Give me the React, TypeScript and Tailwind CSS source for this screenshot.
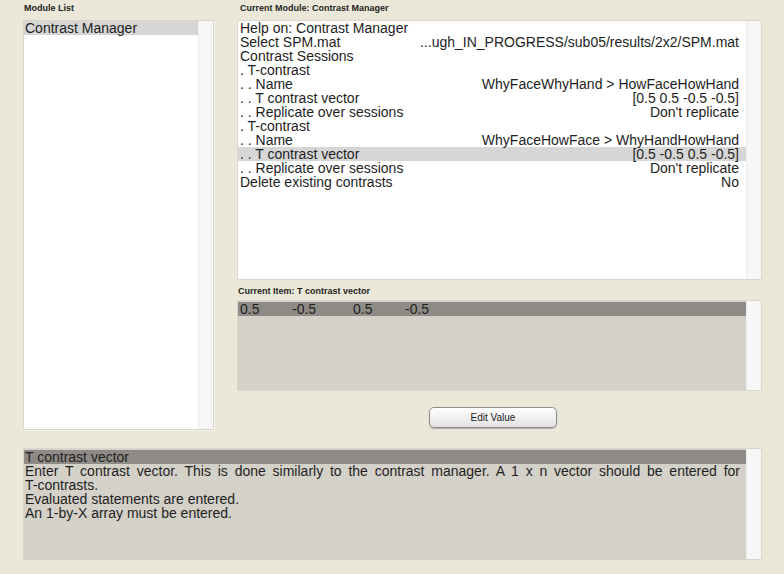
import React from "react";

const font = { fontFamily: '"Liberation Sans", Arial, sans-serif' };

function Track() {
  return <div className="w-[15px] shrink-0 bg-[#f7f7f7] border-l border-[#ececec]" />;
}

function Row({ l, r, hl }: { l: string; r?: string; hl?: boolean }) {
  return (
    <div className={`flex justify-between pl-[2px] pr-[7px] whitespace-pre ${hl ? "bg-[#d6d6d6]" : ""}`}>
      <span>{l}</span>
      {r ? <span>{r}</span> : null}
    </div>
  );
}

export default function App() {
  return (
    <div
      className="w-[784px] h-[574px] bg-[#ebe8d9] pl-[23px] pt-[3px] text-[#1e1e1e] overflow-hidden"
      style={font}
    >
      <div className="flex items-start">
        {/* Left column */}
        <div className="w-[191px] flex flex-col">
          <div className="h-[17px] text-[9px] font-bold leading-[9px] pl-[1px] pt-[1px]">Module List</div>
          <div className="h-[410px] flex border border-[#d9d7cd] bg-white shadow-[1px_1px_0_#f4f2ea]">
            <div className="flex-1 text-[14px] leading-[14px]">
              <div className="bg-[#d6d6d6] pl-[1px]">Contrast Manager</div>
            </div>
            <Track />
          </div>
        </div>

        {/* Right column */}
        <div className="ml-[23px] w-[525px] flex flex-col">
          <div className="h-[17px] text-[9px] font-bold leading-[9px] pl-[3px] pt-[1px]">
            Current Module: Contrast Manager
          </div>
          <div className="h-[260px] flex border border-[#d9d7cd] bg-white">
            <div className="flex-1 text-[14px] leading-[14px]">
              <Row l="Help on: Contrast Manager" />
              <Row l="Select SPM.mat" r="...ugh_IN_PROGRESS/sub05/results/2x2/SPM.mat" />
              <Row l="Contrast Sessions" />
              <Row l=". T-contrast" />
              <Row l=". . Name" r="WhyFaceWhyHand > HowFaceHowHand" />
              <Row l=". . T contrast vector" r="[0.5 0.5 -0.5 -0.5]" />
              <Row l=". . Replicate over sessions" r="Don't replicate" />
              <Row l=". T-contrast" />
              <Row l=". . Name" r="WhyFaceHowFace > WhyHandHowHand" />
              <Row l=". . T contrast vector" r="[0.5 -0.5 0.5 -0.5]" hl />
              <Row l=". . Replicate over sessions" r="Don't replicate" />
              <Row l="Delete existing contrasts" r="No" />
            </div>
            <Track />
          </div>

          <div className="h-[20px] text-[9px] font-bold leading-[9px] pl-[1px] pt-[7px]">
            Current Item: T contrast vector
          </div>
          <div className="h-[91px] flex border border-[#d9d7cd] bg-[#d4d1c9]">
            <div className="flex-1 text-[14px] leading-[14px]">
              <div className="bg-[#8e8b87] mt-[1px] flex pl-[2px] whitespace-pre">
                <span className="w-[52px]">0.5</span>
                <span className="w-[61px]">-0.5</span>
                <span className="w-[52px]">0.5</span>
                <span>-0.5</span>
              </div>
            </div>
            <Track />
          </div>

          <div className="pt-[16px] pl-[192px] flex">
            <button className="block w-[128px] h-[21px] rounded-[5px] border border-[#8c8c8c] bg-gradient-to-b from-[#ffffff] to-[#e2e2e2] shadow-[0_1px_1px_rgba(0,0,0,0.25)] text-[10px] leading-[10px] text-[#222]">
              Edit Value
            </button>
          </div>
        </div>
      </div>

      {/* Bottom help box */}
      <div className="mt-[18px] w-[739px] h-[112px] flex border border-[#d9d7cd] bg-[#d4d1c9]">
        <div className="flex-1 text-[14px] leading-[14px] pt-[1px]">
          <div className="bg-[#8e8b87] pl-[1px]">T contrast vector</div>
          <div className="pl-[1px] pr-[6px] text-justify">
            Enter T contrast vector. This is done similarly to the contrast manager. A 1 x n vector should be entered for{" "}
            <span className="whitespace-nowrap">T-contrasts.</span>
          </div>
          <div className="pl-[1px]">Evaluated statements are entered.</div>
          <div className="pl-[1px]">An 1-by-X array must be entered.</div>
        </div>
        <Track />
      </div>
    </div>
  );
}
